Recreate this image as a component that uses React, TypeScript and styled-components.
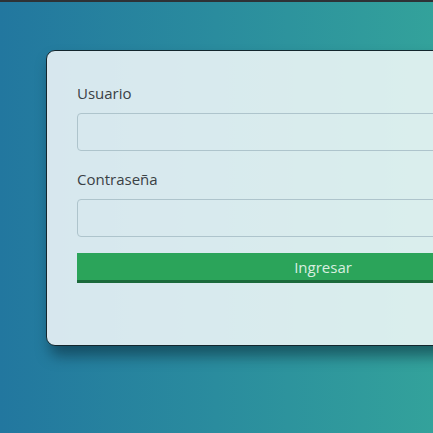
import React from "react";
import styled, { createGlobalStyle } from "styled-components";

const Global = createGlobalStyle`
  html, body { margin: 0; padding: 0; height: 100%; overflow: hidden; }
  body { font-family: "Open Sans", "Noto Sans", sans-serif; }
  #root { height: 100%; }
`;

const Page = styled.div`
  box-sizing: border-box;
  height: 433px;
  width: 433px;
  overflow: hidden;
  border-top: 2px solid #2e3236;
  background: linear-gradient(to right, #22779f 0%, #2a8c9e 50%, #33a29b 100%);
  padding: 48px 0 0 46px;
`;

const Card = styled.form`
  box-sizing: border-box;
  width: 554px;
  flex-shrink: 0;
  background: rgba(255, 255, 255, 0.82);
  border: 1px solid #13262d;
  border-radius: 9px;
  box-shadow: 4px 10px 14px rgba(10, 40, 55, 0.55);
  padding: 30px 30px 62px 30px;
  display: flex;
  flex-direction: column;
`;

const Group = styled.div`
  display: flex;
  flex-direction: column;
  margin-bottom: 16px;
`;

const Label = styled.label`
  font-size: 15px;
  line-height: 24px;
  color: #3a4145;
  margin-bottom: 8px;
`;

const Input = styled.input`
  box-sizing: border-box;
  height: 38px;
  width: 100%;
  background: transparent;
  border: 1px solid #aec4cc;
  border-radius: 4px;
  outline: none;
  font-size: 15px;
`;

const Button = styled.button`
  box-sizing: border-box;
  height: 30px;
  width: 100%;
  background: #2ba45a;
  border: none;
  border-bottom: 3px solid #1b6a3b;
  border-radius: 0;
  color: #d9efe0;
  font-family: "Open Sans", "Noto Sans", sans-serif;
  font-size: 15px;
  padding: 0;
  cursor: pointer;
`;

export default function App() {
  return (
    <>
      <Global />
      <Page>
        <Card onSubmit={(e) => e.preventDefault()}>
          <Group>
            <Label>Usuario</Label>
            <Input type="text" />
          </Group>
          <Group>
            <Label>Contraseña</Label>
            <Input type="password" />
          </Group>
          <Button type="submit">Ingresar</Button>
        </Card>
      </Page>
    </>
  );
}
